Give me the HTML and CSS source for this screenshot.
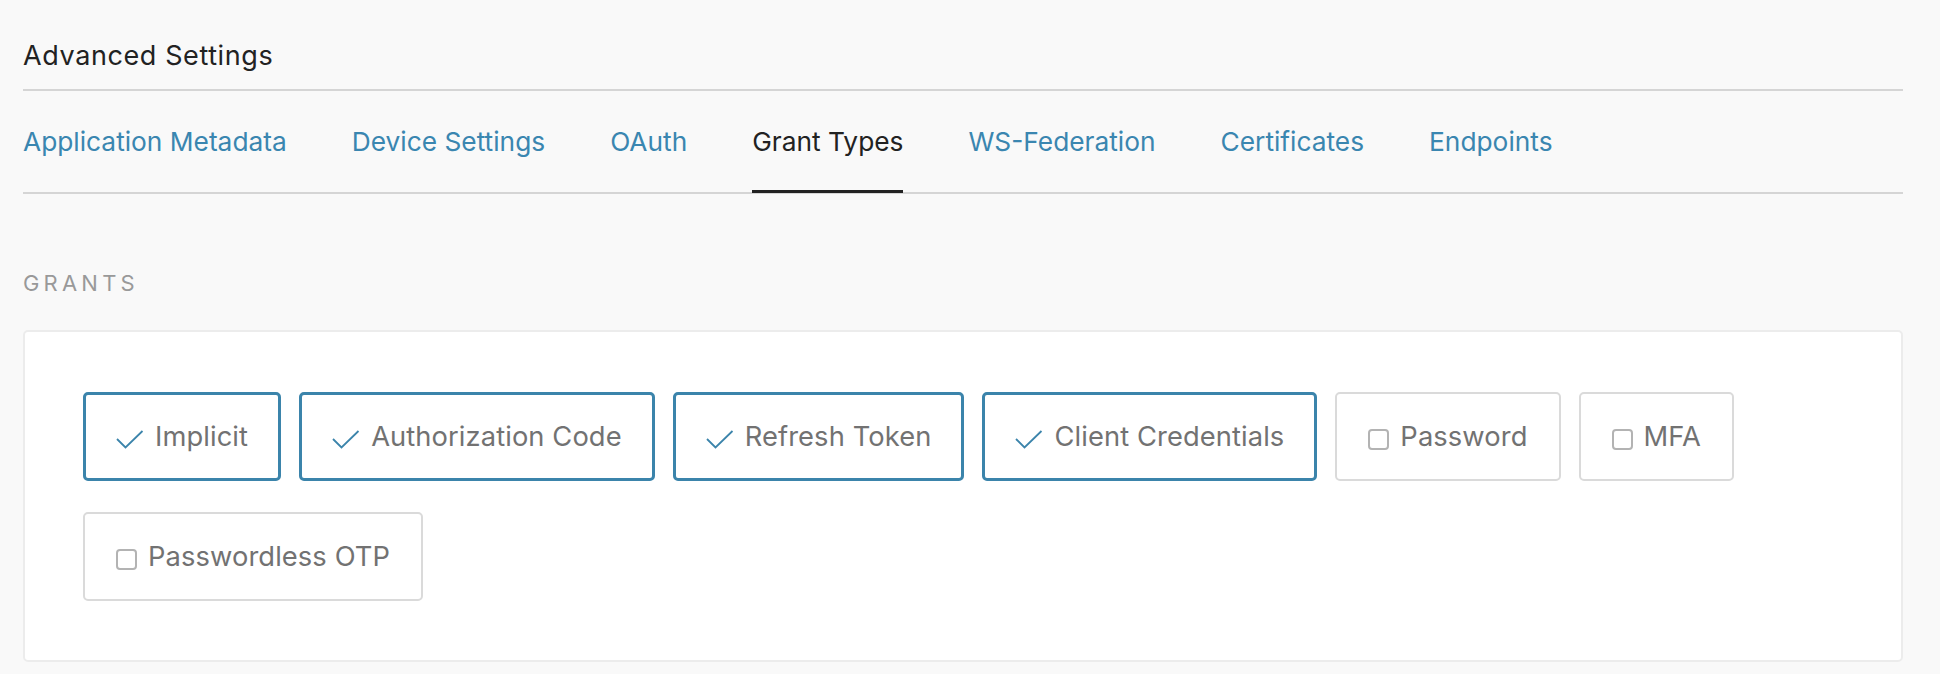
FILE: index.html
```html
<!DOCTYPE html>
<html lang="en">
<head>
  <meta charset="UTF-8">
  <meta name="viewport" content="width=device-width, initial-scale=1.0">
  <title>Advanced Settings</title>
  <link rel="stylesheet" href="styles.css">
</head>
<body>
  <div class="settings">
    <div class="settings-title">Advanced Settings</div>

    <div class="tabs">
      <a href="#metadata" class="tab">Application Metadata</a>
      <a href="#device" class="tab">Device Settings</a>
      <a href="#oauth" class="tab">OAuth</a>
      <a href="#grants" class="tab active">Grant Types</a>
      <a href="#wsfed" class="tab">WS-Federation</a>
      <a href="#certs" class="tab">Certificates</a>
      <a href="#endpoints" class="tab">Endpoints</a>
    </div>

    <div class="section-label">Grants</div>

    <div class="card">
      <div class="grant-list">
        <label class="grant checked">
          <svg class="check" width="28" height="19" viewBox="0 0 28 19"><polyline points="1,9 9.5,17.5 26.5,1" /></svg>
          <span class="grant-name">Implicit</span>
        </label>
        <label class="grant checked">
          <svg class="check" width="28" height="19" viewBox="0 0 28 19"><polyline points="1,9 9.5,17.5 26.5,1" /></svg>
          <span class="grant-name">Authorization Code</span>
        </label>
        <label class="grant checked">
          <svg class="check" width="28" height="19" viewBox="0 0 28 19"><polyline points="1,9 9.5,17.5 26.5,1" /></svg>
          <span class="grant-name">Refresh Token</span>
        </label>
        <label class="grant checked">
          <svg class="check" width="28" height="19" viewBox="0 0 28 19"><polyline points="1,9 9.5,17.5 26.5,1" /></svg>
          <span class="grant-name">Client Credentials</span>
        </label>
        <label class="grant">
          <span class="box"></span>
          <span class="grant-name">Password</span>
        </label>
        <label class="grant">
          <span class="box"></span>
          <span class="grant-name">MFA</span>
        </label>
        <label class="grant">
          <span class="box"></span>
          <span class="grant-name">Passwordless OTP</span>
        </label>
      </div>
    </div>
  </div>
</body>
</html>
```

FILE: styles.css
```css
body {
  margin: 0;
  padding: 0;
  background-color: #f9f9f9;
  font-family: Inter, "Liberation Sans", Arial, sans-serif;
}
.settings {
  padding: 0 37px 0 23px;
}
.settings-title {
  font-size: 27px;
  line-height: 30px;
  letter-spacing: 0.6px;
  color: #222;
  padding: 41px 0 18px;
  border-bottom: 2px solid #d5d5d5;
}

/* tab bar */
.tabs {
  display: flex;
  gap: 65px;
  border-bottom: 2px solid #d5d5d5;
}
.tab {
  font-size: 26.3px;
  line-height: 30px;
  padding: 36px 0 33px;
  margin-bottom: -1px;
  color: #3a86b0;
  text-decoration: none;
  border-bottom: 3px solid transparent;
}
.tab.active {
  color: #222;
  border-bottom-color: #222;
}

.section-label {
  font-size: 22px;
  line-height: 26px;
  letter-spacing: 4.2px;
  text-transform: uppercase;
  color: #999;
  padding-top: 76px;
  margin-bottom: 34px;
}

/* grant picker */
.card {
  background-color: #fff;
  border: 2px solid #ececec;
  border-radius: 5px;
  padding: 60px 58px 59px;
}
.grant-list {
  display: flex;
  flex-wrap: wrap;
  column-gap: 18px;
  row-gap: 31px;
}
.grant {
  display: flex;
  align-items: center;
  gap: 11px;
  height: 89px;
  box-sizing: border-box;
  padding: 0 31px;
  border: 2px solid #dadada;
  border-radius: 5px;
  cursor: pointer;
}
.grant.checked {
  padding: 0 30px;
  border: 3px solid #3b84ab;
}
.grant-name {
  font-size: 27.3px;
  letter-spacing: 0.1px;
  color: #727272;
}
.check {
  margin-top: 5px;
}
.check polyline {
  fill: none;
  stroke: #3b84ab;
  stroke-width: 1.8;
}
.box {
  width: 21px;
  height: 21px;
  box-sizing: border-box;
  border: 2px solid #b3b3b3;
  border-radius: 4px;
  margin-top: 6px;
}
```
